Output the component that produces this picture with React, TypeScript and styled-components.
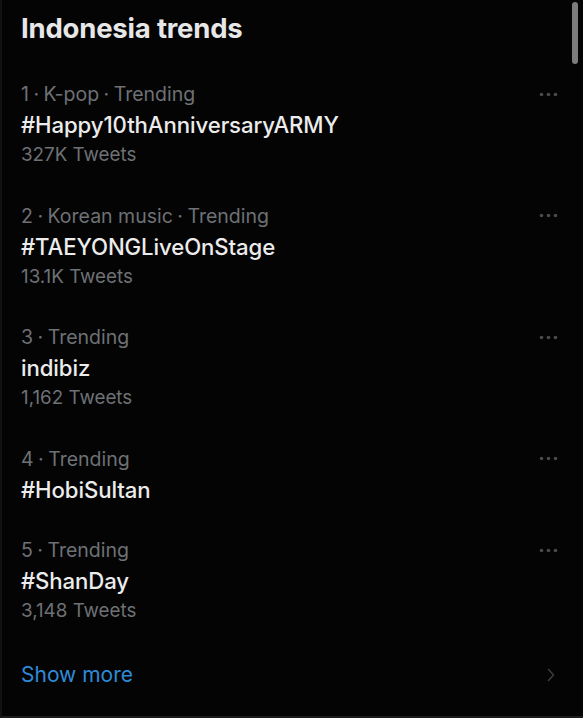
import React from "react";
import styled, { createGlobalStyle } from "styled-components";

const GlobalStyle = createGlobalStyle`
  html, body {
    margin: 0;
    padding: 0;
    background: #000;
  }
  body {
    font-family: Inter, "Noto Sans", "Liberation Sans", sans-serif;
    -webkit-font-smoothing: antialiased;
  }
`;

type Trend = {
  rank: number;
  context?: string;
  name: string;
  count?: string;
};

const trends: Trend[] = [
  { rank: 1, context: "K-pop", name: "#Happy10thAnniversaryARMY", count: "327K Tweets" },
  { rank: 2, context: "Korean music", name: "#TAEYONGLiveOnStage", count: "13.1K Tweets" },
  { rank: 3, name: "indibiz", count: "1,162 Tweets" },
  { rank: 4, name: "#HobiSultan" },
  { rank: 5, name: "#ShanDay", count: "3,148 Tweets" },
];

const Panel = styled.section`
  position: relative;
  width: 583px;
  height: 718px;
  box-sizing: border-box;
  background: #040404;
  border-bottom: 2px solid #1c1c1e;
  border-left: 2px solid #121212;
  padding: 11px 25px 0 19px;
  overflow: hidden;
`;

const Scrollbar = styled.div`
  position: absolute;
  top: 2px;
  right: 5px;
  width: 6px;
  height: 62px;
  border-radius: 3px;
  background: #7c7c7c;
`;

const Title = styled.h2`
  margin: 0 0 34px;
  font-size: 27.5px;
  line-height: 34px;
  font-weight: 700;
  color: #e7e7e7;
  letter-spacing: -0.2px;
`;

const List = styled.ol`
  list-style: none;
  margin: 0;
  padding: 0;
  display: flex;
  flex-direction: column;
  gap: 30.5px;
`;

const Row = styled.li`
  display: flex;
  flex-direction: column;
`;

const MetaLine = styled.div`
  display: flex;
  align-items: center;
  justify-content: space-between;
  height: 30px;
`;

const Meta = styled.span`
  font-size: 19.5px;
  line-height: 30px;
  color: #6e7175;
`;

const Dot = styled.span`
  margin: 0 4.5px;
`;

const Name = styled.span`
  font-size: 22.2px;
  line-height: 31px;
  font-weight: 500;
  color: #ececec;
  letter-spacing: -0.1px;
`;

const Count = styled.span`
  font-size: 18.8px;
  line-height: 30px;
  color: #6e7175;
`;

const More = styled.button`
  all: unset;
  display: flex;
  align-items: center;
  justify-content: space-between;
  margin-top: 34px;
  height: 30px;
  width: 100%;
  box-sizing: border-box;
  padding-right: 3px;
  cursor: pointer;
`;

const MoreLabel = styled.span`
  font-size: 21px;
  line-height: 30px;
  color: #2f8bd8;
`;

const Dots: React.FC = () => (
  <svg width="19" height="5" viewBox="0 0 19 5" aria-hidden>
    <circle cx="2.5" cy="2.5" r="1.8" fill="#4a4a4a" />
    <circle cx="9.5" cy="2.5" r="1.8" fill="#4a4a4a" />
    <circle cx="16.5" cy="2.5" r="1.8" fill="#4a4a4a" />
  </svg>
);

const Chevron: React.FC = () => (
  <svg width="8" height="14" viewBox="0 0 8 14" aria-hidden>
    <path d="M1.5 1.5 L6.5 7 L1.5 12.5" fill="none" stroke="#3c3c3c" strokeWidth="1.6" strokeLinecap="round" strokeLinejoin="round" />
  </svg>
);

export default function App() {
  return (
    <>
      <GlobalStyle />
      <Panel>
        <Scrollbar />
        <Title>Indonesia trends</Title>
        <List>
          {trends.map((t) => (
            <Row key={t.rank}>
              <MetaLine>
                <Meta>
                  {t.rank}
                  <Dot>·</Dot>
                  {t.context && (
                    <>
                      {t.context}
                      <Dot>·</Dot>
                    </>
                  )}
                  Trending
                </Meta>
                <Dots />
              </MetaLine>
              <Name>{t.name}</Name>
              {t.count && <Count>{t.count}</Count>}
            </Row>
          ))}
        </List>
        <More>
          <MoreLabel>Show more</MoreLabel>
          <Chevron />
        </More>
      </Panel>
    </>
  );
}
